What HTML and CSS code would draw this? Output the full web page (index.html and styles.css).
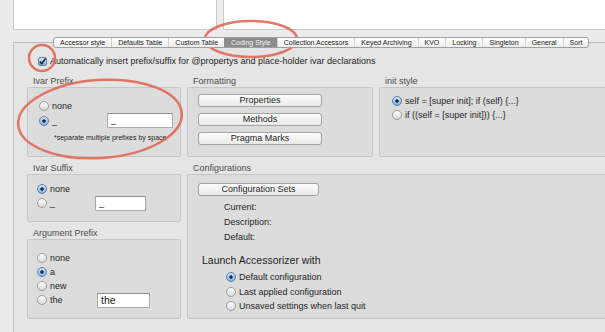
FILE: index.html
```html
<!DOCTYPE html>
<html>
<head>
  <title>Accessorizer Preferences</title>
  <link rel="stylesheet" href="styles.css">
</head>
<body>
  <div class="top">
    <div class="well well-left"></div>
    <div class="well well-right"></div>
  </div>

  <div class="tabview">
    <div class="tabs">
      <span class="tab">Accessor style</span>
      <span class="tab">Defaults Table</span>
      <span class="tab">Custom Table</span>
      <span class="tab selected">Coding Style</span>
      <span class="tab">Collection Accessors</span>
      <span class="tab">Keyed Archiving</span>
      <span class="tab">KVO</span>
      <span class="tab">Locking</span>
      <span class="tab">Singleton</span>
      <span class="tab">General</span>
      <span class="tab">Sort</span>
    </div>

    <div class="panel">
      <div class="check-row">
        <span class="checkbox">
          <svg width="9" height="9" viewBox="0 0 9 9"><path d="M1.8 4.6 L3.8 6.8 L7.6 1.4" fill="none" stroke="#14243a" stroke-width="1.6"/></svg>
        </span>
        Automatically insert prefix/suffix for @propertys and place-holder ivar declarations
      </div>

      <div class="grid">
        <div class="group">
          <div class="group-title">Ivar Prefix</div>
          <div class="box box-prefix">
            <div class="opt-row"><span class="radio"></span><span class="opt">none</span></div>
            <div class="opt-row"><span class="radio on"></span><span class="opt">_</span><span class="field field-prefix">_</span></div>
            <div class="note">*separate multiple prefixes by space</div>
          </div>
        </div>

        <div class="group">
          <div class="group-title">Formatting</div>
          <div class="box box-format">
            <div class="btn">Properties</div>
            <div class="btn">Methods</div>
            <div class="btn">Pragma Marks</div>
          </div>
        </div>

        <div class="group">
          <div class="group-title">init style</div>
          <div class="box box-init">
            <div class="opt-row"><span class="radio on"></span>self = [super init]; if (self) {...}</div>
            <div class="opt-row"><span class="radio"></span>if ((self = [super init])) {...}</div>
          </div>
        </div>

        <div class="stack">
          <div class="group">
            <div class="group-title">Ivar Suffix</div>
            <div class="box box-suffix">
              <div class="opt-row"><span class="radio on"></span><span class="opt">none</span></div>
              <div class="opt-row"><span class="radio"></span><span class="opt">_</span><span class="field field-suffix">_</span></div>
            </div>
          </div>

          <div class="group">
            <div class="group-title">Argument Prefix</div>
            <div class="box box-arg">
              <div class="opt-row"><span class="radio"></span><span class="opt">none</span></div>
              <div class="opt-row"><span class="radio on"></span><span class="opt">a</span></div>
              <div class="opt-row"><span class="radio"></span><span class="opt">new</span></div>
              <div class="opt-row"><span class="radio"></span><span class="opt">the</span><span class="field field-arg">the</span></div>
            </div>
          </div>
        </div>

        <div class="group wide">
          <div class="group-title">Configurations</div>
          <div class="box box-config">
            <div class="btn btn-config">Configuration Sets</div>
            <div class="info">Current:</div>
            <div class="info">Description:</div>
            <div class="info">Default:</div>
            <div class="launch">Launch Accessorizer with</div>
            <div class="launch-opts">
              <div class="opt-row"><span class="radio on"></span>Default configuration</div>
              <div class="opt-row"><span class="radio"></span>Last applied configuration</div>
              <div class="opt-row"><span class="radio"></span>Unsaved settings when last quit</div>
            </div>
          </div>
        </div>
      </div>
    </div>
  </div>

  <!-- hand-drawn annotation marks over the screenshot -->
  <svg class="marks" width="605" height="332" viewBox="0 0 605 332">
    <ellipse cx="251" cy="39" rx="46" ry="18" />
    <circle cx="42" cy="58" r="13" />
    <ellipse cx="100" cy="119" rx="82" ry="39" transform="rotate(-4 100 119)" />
  </svg>
</body>
</html>
```

FILE: styles.css
```css
body {
  margin: 0;
  width: 605px;
  height: 332px;
  overflow: hidden;
  position: relative;
  background: #ebebeb;
  font-family: "Liberation Sans", Arial, sans-serif;
  font-size: 9px;
  color: #1e1e1e;
}

.top {
  display: flex;
  gap: 6px;
  height: 30px;
  padding-left: 13px;
}
.well {
  background: #fff;
  border: 1px solid #c9c9c9;
  border-top: none;
}
.well-left {
  width: 202px;
}
.well-right {
  flex: 1;
  border-right: none;
}

.tabview {
  margin: 7px 0 0 13px;
}
.tabs {
  display: flex;
  width: max-content;
  margin-left: 40px;
  margin-bottom: -6px;
  position: relative;
  z-index: 1;
  border: 1px solid #a0a0a0;
  border-radius: 3px;
  background: linear-gradient(#ffffff, #ededed);
  overflow: hidden;
}
.tab {
  padding: 0 6px;
  font-size: 7px;
  line-height: 9px;
  color: #222;
  border-left: 1px solid #d2d2d2;
}
.tab:first-child {
  border-left: none;
}
.tab.selected {
  background: #8c8c8c;
  color: #f2f2f2;
  border-left-color: #8c8c8c;
}

.panel {
  height: 277px;
  border-top: 1px solid #bababa;
  border-left: 1px solid #c6c6c6;
  background: #e5e5e5;
  padding: 12px 0 0 13px;
  overflow: hidden;
}

.check-row {
  display: flex;
  align-items: center;
  gap: 3px;
  height: 12px;
  padding-left: 11px;
}
.checkbox {
  width: 9px;
  height: 9px;
  border: 1px solid #5f82ad;
  border-radius: 2px;
  background: linear-gradient(#d2e4f8, #86b3e6);
  box-sizing: border-box;
  display: flex;
  align-items: center;
  justify-content: center;
}
.checkbox svg {
  flex: none;
}

.grid {
  display: grid;
  grid-template-columns: 154px 186px 240px;
  align-items: start;
  column-gap: 6px;
  row-gap: 5px;
  margin-top: 8px;
}
.wide {
  grid-column: span 2;
}
.stack {
  display: flex;
  flex-direction: column;
  gap: 5px;
}
.group {
  display: flex;
  flex-direction: column;
}
.group-title {
  height: 12px;
  line-height: 12px;
  padding-left: 6px;
  color: #4a4a4a;
}
.box {
  box-sizing: border-box;
  border: 1px solid #c5c5c5;
  border-radius: 2px;
  background: #dcdcdc;
}

.opt-row {
  display: flex;
  align-items: center;
  gap: 3px;
  height: 14px;
}
.radio {
  flex: none;
  width: 10px;
  height: 10px;
  box-sizing: border-box;
  border: 1px solid #9c9c9c;
  border-radius: 50%;
  background: linear-gradient(#ffffff, #d9d9d9);
}
.radio.on {
  border-color: #5a7ea9;
  background: radial-gradient(circle, #1b2b44 0 1.4px, transparent 2px), linear-gradient(#d3e6fb, #7fb1ea);
}

.field {
  height: 15px;
  box-sizing: border-box;
  background: #fff;
  border: 1px solid #ababab;
  border-top-color: #8f8f8f;
  padding-left: 3px;
  line-height: 13px;
}

.box-prefix {
  height: 70px;
  padding: 10px 0 0 11px;
}
.box-prefix .opt-row {
  height: 15px;
}
.box-prefix .opt {
  width: 52px;
}
.field-prefix {
  width: 66px;
}
.note {
  margin: 5px 0 0 15px;
  font-size: 7px;
  line-height: 10px;
}

.box-format {
  height: 70px;
  padding: 6px 0 0 10px;
  display: flex;
  flex-direction: column;
  gap: 6px;
}
.btn {
  width: 124px;
  height: 13px;
  box-sizing: border-box;
  border: 1px solid #a2a2a2;
  border-radius: 3px;
  background: linear-gradient(#fdfdfd, #e9e9e9);
  text-align: center;
  line-height: 11px;
}

.box-init {
  height: 70px;
  padding: 6px 0 0 12px;
}

.box-suffix {
  height: 48px;
  padding: 7px 0 0 9px;
}
.box-suffix .opt {
  width: 42px;
}
.field-suffix {
  width: 51px;
}

.box-arg {
  height: 80px;
  padding: 11px 0 0 9px;
}
.box-arg .opt {
  width: 44px;
}
.field-arg {
  width: 53px;
  font-size: 10.5px;
}

.box-config {
  height: 145px;
  padding: 8px 0 0 10px;
}
.btn-config {
  width: 121px;
}
.info {
  margin-left: 26px;
  line-height: 15px;
}
.info:nth-of-type(2) {
  margin-top: 4px;
}
.launch {
  margin: 8px 0 0 4px;
  font-size: 10.5px;
  line-height: 14px;
}
.launch-opts {
  margin: 3px 0 0 28px;
}
.launch-opts .opt-row {
  height: 14.5px;
}

.marks {
  position: absolute;
  left: 0;
  top: 0;
  pointer-events: none;
}
.marks ellipse,
.marks circle {
  fill: none;
  stroke: #e1624f;
  stroke-width: 2.5;
  opacity: 0.85;
}
```
